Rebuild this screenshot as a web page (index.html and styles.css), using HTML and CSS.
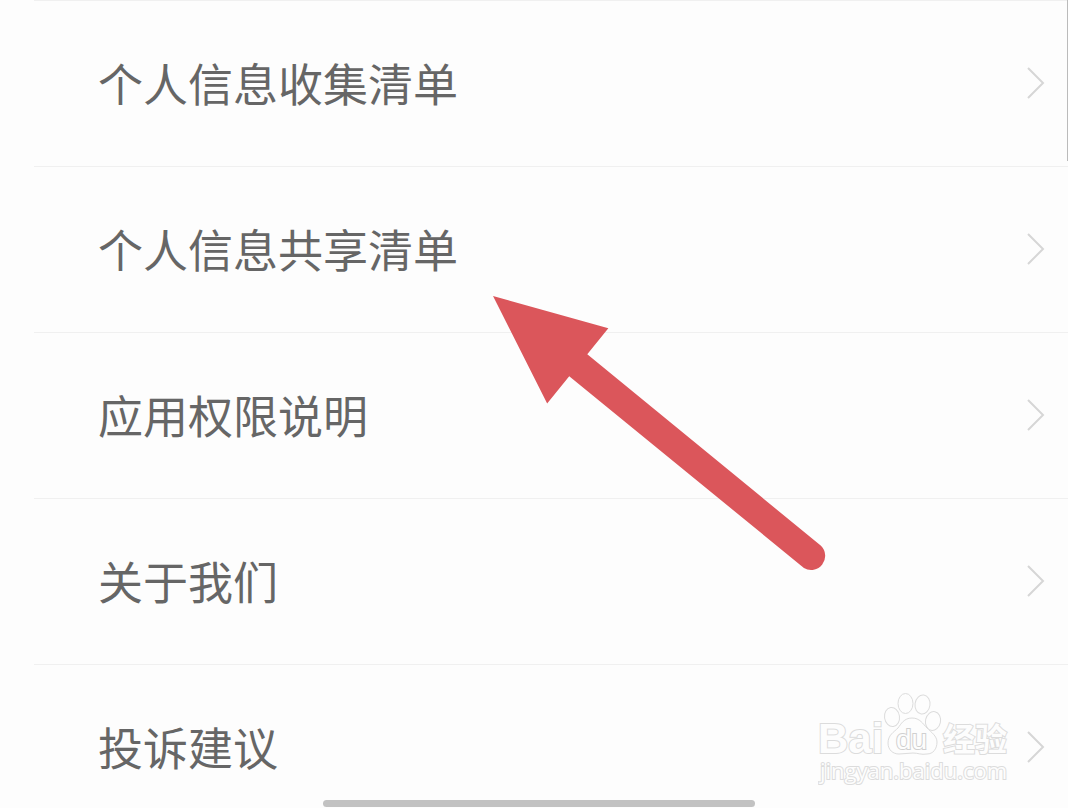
FILE: index.html
```html
<!DOCTYPE html>
<html lang="zh-CN">
<head>
    <meta charset="UTF-8">
    <meta name="viewport" content="width=device-width, initial-scale=1.0">
    <title>设置</title>
    <link rel="stylesheet" href="styles.css">
</head>
<body>
    <main class="screen">
        <nav class="menu">
            <a class="menu-item" href="#collect">
                <span>个人信息收集清单</span>
                <svg class="chevron" viewBox="0 0 18 32"><path d="M1 1L16 16L1 31"/></svg>
            </a>
            <a class="menu-item" href="#share">
                <span>个人信息共享清单</span>
                <svg class="chevron" viewBox="0 0 18 32"><path d="M1 1L16 16L1 31"/></svg>
            </a>
            <a class="menu-item" href="#permissions">
                <span>应用权限说明</span>
                <svg class="chevron" viewBox="0 0 18 32"><path d="M1 1L16 16L1 31"/></svg>
            </a>
            <a class="menu-item" href="#about">
                <span>关于我们</span>
                <svg class="chevron" viewBox="0 0 18 32"><path d="M1 1L16 16L1 31"/></svg>
            </a>
            <a class="menu-item" href="#feedback">
                <span>投诉建议</span>
                <svg class="chevron" viewBox="0 0 18 32"><path d="M1 1L16 16L1 31"/></svg>
            </a>
        </nav>

        <div class="scroll-thumb"></div>

        <!-- pointer to the second item -->
        <svg class="arrow" viewBox="0 0 334 276">
            <path d="M0 0L115 32L94 58L327 249A14 14 0 0 1 310 271L76 80L54 107Z"/>
        </svg>

        <svg class="watermark" viewBox="0 0 200 100">
            <text class="wm-latin" x="0" y="63">Bai</text>
            <ellipse cx="74" cy="27" rx="7.5" ry="9.5" transform="rotate(-8 74 27)"/>
            <ellipse cx="87.5" cy="13.5" rx="7.5" ry="10"/>
            <ellipse cx="104.5" cy="14.5" rx="7.5" ry="9.5" transform="rotate(8 104.5 14.5)"/>
            <ellipse cx="115" cy="31" rx="7.5" ry="9.5" transform="rotate(12 115 31)"/>
            <path d="M94 28C86 28 83 34 80 38C76 42 70 45 70 53C70 60 75 64 81 64C86 64 90 63 95 63C100 63 103 65 109 64C115 64 119 59 119 52C119 46 113 42 109 38C105 34 102 28 94 28Z"/>
            <text class="wm-du" x="78" y="59">du</text>
            <text class="wm-cjk" x="125" y="61">经验</text>
            <text class="wm-url" x="2" y="89">jingyan.baidu.com</text>
        </svg>

        <div class="home-bar"></div>
    </main>
</body>
</html>
```

FILE: styles.css
```css
* {
    box-sizing: border-box;
}
body {
    margin: 0;
    background: #fdfdfd;
    color: #666;
    font-family: "Noto Sans CJK SC", sans-serif;
}
.screen {
    position: relative;
    height: 100vh;
    overflow: hidden;
}
.menu {
    padding-left: 34px;
}
.menu-item {
    display: flex;
    align-items: center;
    justify-content: space-between;
    height: 166px;
    padding: 0 23px 2px 64px;
    border-top: 1px solid #f0f0f0;
    color: #666;
    font-size: 45px;
    line-height: 64px;
    text-decoration: none;
}
.chevron {
    width: 18px;
    height: 32px;
    fill: none;
    stroke: #d6d6d6;
    stroke-width: 2;
}
.scroll-thumb {
    position: absolute;
    top: 0;
    right: 0;
    width: 1px;
    height: 161px;
    background: #bbb;
}
.arrow {
    position: absolute;
    top: 296px;
    left: 493px;
    width: 335px;
    height: 277px;
    fill: #db565b;
}
.watermark {
    position: absolute;
    right: 50px;
    bottom: 18px;
    width: 200px;
    height: 100px;
    fill: #fdfdfd;
    stroke: #dcdcdc;
    stroke-width: 1;
}
.watermark text {
    stroke-width: 2;
    paint-order: stroke;
}
.wm-latin {
    font: bold 42px "Liberation Sans", sans-serif;
}
.watermark .wm-du {
    font: 28px "Liberation Sans", sans-serif;
    stroke: #d0d0d0;
}
.wm-cjk {
    font: bold 32px "Noto Sans CJK SC", sans-serif;
}
.wm-url {
    font: 22px "Open Sans", sans-serif;
}
.home-bar {
    position: absolute;
    bottom: 1px;
    left: 323px;
    width: 432px;
    height: 7px;
    border-radius: 4px;
    background: #c2c2c2;
}
```
